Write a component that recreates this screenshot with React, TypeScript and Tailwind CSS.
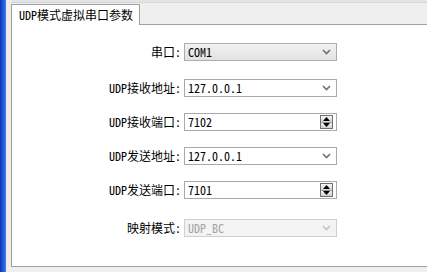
const FONT = '"Noto Sans Mono CJK SC", "Noto Sans CJK SC", "DejaVu Sans Mono", monospace';

function Chevron({ disabled }: { disabled?: boolean }) {
  return (
    <svg width="9" height="6" viewBox="0 0 9 6" className="shrink-0">
      <path
        d="M1 1 L4.5 4.5 L8 1"
        fill="none"
        stroke={disabled ? '#c4c4c4' : '#707070'}
        strokeWidth="1.6"
      />
    </svg>
  );
}

function SpinButtons() {
  return (
    <div className="flex h-[14px] w-[13px] flex-col border border-[#6f6f6f]">
      <div className="flex flex-1 items-center justify-center border-b border-[#9a9a9a] bg-gradient-to-b from-[#f6f6f6] to-[#d6d6d6]">
        <svg width="7" height="4" viewBox="0 0 7 4">
          <path d="M0 4 L3.5 0 L7 4 Z" fill="#000" />
        </svg>
      </div>
      <div className="flex flex-1 items-center justify-center bg-gradient-to-b from-[#f0f0f0] to-[#d0d0d0]">
        <svg width="7" height="4" viewBox="0 0 7 4">
          <path d="M0 0 L3.5 4 L7 0 Z" fill="#000" />
        </svg>
      </div>
    </div>
  );
}

type Row = {
  label: string;
  value: string;
  kind: 'readonly' | 'combo' | 'spin' | 'disabled';
  mt: string;
};

const rows: Row[] = [
  { label: '串口:', value: 'COM1', kind: 'readonly', mt: 'mt-[18px]' },
  { label: 'UDP接收地址:', value: '127.0.0.1', kind: 'combo', mt: 'mt-[18px]' },
  { label: 'UDP接收端口:', value: '7102', kind: 'spin', mt: 'mt-[16px]' },
  { label: 'UDP发送地址:', value: '127.0.0.1', kind: 'combo', mt: 'mt-[16px]' },
  { label: 'UDP发送端口:', value: '7101', kind: 'spin', mt: 'mt-[16px]' },
  { label: '映射模式:', value: 'UDP_BC', kind: 'disabled', mt: 'mt-[20px]' },
];

function Field({ row }: { row: Row }) {
  const box =
    row.kind === 'readonly'
      ? 'border-[#acacac] bg-gradient-to-b from-[#f2f2f2] to-[#e2e2e2] text-black'
      : row.kind === 'disabled'
        ? 'border-[#cfcfcf] bg-[#f3f3f3] text-[#a3a3a3]'
        : 'border-[#a9a9a9] bg-white text-black';
  return (
    <div className={`flex h-[18px] items-center ${row.mt}`}>
      <div className="w-[172px] pr-[3px] text-right text-[12px] leading-[18px] text-black">
        {row.label}
      </div>
      <div className={`flex h-[18px] w-[153px] items-center border pl-[3px] pr-[3px] ${box}`}>
        <span className="flex-1 text-[12px] leading-[16px]">{row.value}</span>
        {row.kind === 'spin' ? (
          <SpinButtons />
        ) : (
          <span className="pr-[2px]">
            <Chevron disabled={row.kind === 'disabled'} />
          </span>
        )}
      </div>
    </div>
  );
}

export default function App() {
  return (
    <div className="flex h-[272px] w-[427px] overflow-hidden bg-[#ececec]" style={{ fontFamily: FONT }}>
      <div className="w-[6px] shrink-0 bg-gradient-to-r from-[#0b36b8] via-[#1f55d6] to-[#4a7be6]" />
      <div className="w-[5px] shrink-0 bg-[#ededed]" />
      <div className="flex flex-1 flex-col">
        <div className="h-[3px] border-b border-[#d6d6d6] bg-[#e4e4e4]" />
        <div className="flex h-[21px] items-end bg-[#efefef]">
          <div className="relative -mb-[1px] flex h-[21px] w-[129px] items-center border border-b-0 border-[#a0a0a0] bg-white pl-[7px] text-[12px] text-black">
            UDP模式虚拟串口参数
          </div>
          <div className="flex-1" />
        </div>
        <div className="flex h-[243px] flex-col border-t border-b border-l border-[#a0a0a0] bg-white">
          {rows.map((r) => (
            <Field key={r.label} row={r} />
          ))}
        </div>
        <div className="flex-1 bg-[#f0f0f0]" />
      </div>
    </div>
  );
}
